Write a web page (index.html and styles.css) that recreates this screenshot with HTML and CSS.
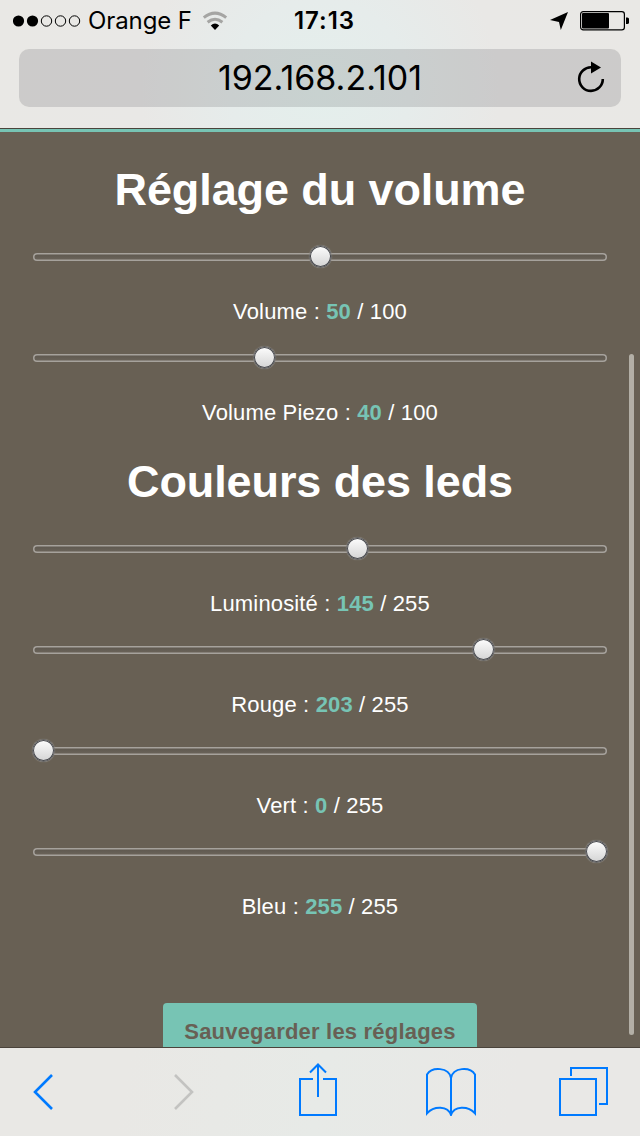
FILE: index.html
```
<!DOCTYPE html>
<html lang="fr">
	<head>
		<meta charset="UTF-8">
		<title>Réglages</title>
		<link rel="stylesheet" href="styles.css">
	</head>
	<body>
		<div class="phone">
			<div class="top">
				<div class="status">
					<div class="network">
						<svg class="signal" width="69" height="12" viewBox="0 0 69 12">
							<circle cx="5.5" cy="6" r="5.6"/>
							<circle cx="19.5" cy="6" r="5.6"/>
							<circle class="empty" cx="33.5" cy="6" r="5.2"/>
							<circle class="empty" cx="47.5" cy="6" r="5.2"/>
							<circle class="empty" cx="61.5" cy="6" r="5.2"/>
						</svg>
						<span class="operator">Orange F</span>
						<svg class="wifi" width="26" height="20" viewBox="0 0 26 20">
							<path class="wave" d="M1.8 6.6Q13 -2.4 24.2 6.6"/>
							<path class="wave" d="M5.6 11.2Q13 5.4 20.4 11.2"/>
							<path d="M8.8 14.4Q13 10.8 17.2 14.4L13 19Z"/>
						</svg>
					</div>
					<div class="clock">17:13</div>
					<div class="power">
						<svg width="18" height="18" viewBox="0 0 18 18">
							<path d="M18 0L10.8 18L9 9.9L0 8Z"/>
						</svg>
						<svg width="49" height="20" viewBox="0 0 49 20">
							<rect class="case" x=".6" y=".6" width="43.8" height="18.2" rx="2.6"/>
							<rect x="2" y="2" width="27" height="15.4" rx="1"/>
							<path d="M46 6.4h1.4q1.6 0 1.6 1.5v3.5q0 1.5 -1.6 1.5H46Z"/>
						</svg>
					</div>
				</div>
				<div class="address">
					<span class="url">192.168.2.101</span>
					<svg class="reload" width="28" height="32" viewBox="0 0 28 32">
						<path class="arc" d="M14.5 6.3A11.8 11.8 0 1 0 25.8 18"/>
						<path d="M14 0.5L24 6.5L14 12.5Z"/>
					</svg>
				</div>
			</div>

			<div class="page">
				<h1>Réglage du volume</h1>
				<div class="setting">
					<input type="range" min="0" max="100" value="50">
					<p>Volume : <b>50</b> / 100</p>
				</div>
				<div class="setting">
					<input type="range" min="0" max="100" value="40">
					<p>Volume Piezo : <b>40</b> / 100</p>
				</div>
				<h1>Couleurs des leds</h1>
				<div class="setting">
					<input type="range" min="0" max="255" value="145">
					<p>Luminosité : <b>145</b> / 255</p>
				</div>
				<div class="setting">
					<input type="range" min="0" max="255" value="203">
					<p>Rouge : <b>203</b> / 255</p>
				</div>
				<div class="setting">
					<input type="range" min="0" max="255" value="0">
					<p>Vert : <b>0</b> / 255</p>
				</div>
				<div class="setting">
					<input type="range" min="0" max="255" value="255">
					<p>Bleu : <b>255</b> / 255</p>
				</div>
				<button class="save">Sauvegarder les réglages</button>
				<div class="scrollbar"></div>
			</div>

			<div class="toolbar">
				<svg class="back" width="20" height="36" viewBox="0 0 20 36">
					<path d="M19 1L2 18L19 35"/>
				</svg>
				<svg class="forward" width="20" height="36" viewBox="0 0 20 36">
					<path d="M1 1L18 18L1 35"/>
				</svg>
				<svg class="share" width="38" height="54" viewBox="0 0 38 54">
					<path d="M14 17H1V53H37V17H24M19 35V2M11 10.5L19 2.5L27 10.5"/>
				</svg>
				<svg class="book" width="50" height="50" viewBox="0 0 50 50">
					<path d="M25 49V12C23 1 6 0.5 1 8.5V47.3C8 39.5 22 39.5 25 49C28 39.5 42 39.5 49 47.3V8.5C44 0.5 27 1 25 12"/>
				</svg>
				<svg class="tabs" width="50" height="50" viewBox="0 0 50 50">
					<path d="M1 13H37V49H1ZM12 10V2H48V38H40"/>
				</svg>
			</div>
		</div>
	</body>
</html>
```
FILE: styles.css
```
body{
	margin: 0;
	font-family: "Liberation Sans", Arial, sans-serif;
}
svg{
	display: block;
	flex: none;
}
.phone{
	display: flex;
	flex-direction: column;
	width: 640px;
	height: 1136px;
	overflow: hidden;
}

/* status bar + address */
.top{
	box-sizing: border-box;
	height: 129px;
	border-bottom: 1px solid #4a433b;
	background: radial-gradient(circle at 320px 90px, #e4efec 0, #e6eceb 90px, #e9e8e6 180px, #e9e8e5 100%);
	font-family: Inter, "Liberation Sans", sans-serif;
}
.status{
	display: grid;
	grid-template-columns: 1fr auto 1fr;
	align-items: center;
	height: 41px;
	padding: 0 11px 0 13px;
	font-size: 24px;
}
.network{
	display: flex;
	align-items: center;
}
.operator{
	margin: 0 10px 0 6px;
	letter-spacing: -0.1px;
	white-space: nowrap;
}
.empty{
	fill: none;
	stroke: #000;
	stroke-width: 1;
}
.wave{
	fill: none;
	stroke: #a5a5a3;
	stroke-width: 3;
}
.clock{
	margin-left: 7px;
	font-weight: 600;
	letter-spacing: 1px;
}
.power{
	display: flex;
	justify-content: flex-end;
	align-items: center;
	gap: 12px;
}
.case{
	fill: none;
	stroke: #000;
	stroke-width: 1.2;
}
.address{
	display: grid;
	grid-template-columns: 1fr auto 1fr;
	align-items: center;
	box-sizing: border-box;
	height: 58px;
	margin: 8px 19px 0;
	padding: 0 16px 2px;
	border-radius: 10px;
	background: rgba(0,0,10,.122);
}
.url{
	grid-column: 2;
	font-size: 34px;
}
.reload{
	justify-self: end;
}
.arc{
	fill: none;
	stroke: #000;
	stroke-width: 2.6;
}

/* page */
.page{
	position: relative;
	box-sizing: border-box;
	height: 918px;
	padding: 32px 33px 0;
	border-top: 3px solid #77c4b4;
	overflow: hidden;
	background-color: #686054;
	color: #fff;
	text-align: center;
}
h1{
	margin: 0 0 30px;
	font-size: 45px;
	letter-spacing: -0.1px;
	line-height: 52px;
}
.setting{
	height: 100.9px;
}
.setting + h1{
	margin-top: 8.2px;
}
.setting p{
	margin: 31px 0 0;
	font-size: 22px;
	letter-spacing: 0.15px;
	line-height: 26px;
}
.setting b{
	color: #77c4b4;
}
input[type='range']{
	-webkit-appearance: none;
	display: block;
	width: 100%;
	height: 22px;
	margin: 0;
	background: none;
}
input[type='range']::-webkit-slider-runnable-track{
	height: 8px;
	border-radius: 4px;
	background: linear-gradient(#5c564d, #6d665c);
	box-shadow: inset 0 0 0 1.5px #a6a29c;
}
input[type='range']::-webkit-slider-thumb{
	-webkit-appearance: none;
	box-sizing: border-box;
	width: 21px;
	height: 21px;
	margin-top: -7px;
	border-radius: 50%;
	background: linear-gradient(#fdfdfd, #d4d4d4);
	box-shadow: inset 0 0 0 1px #45464a, 0 0 0 .5px #45464a, 0 0 1px 1px #8f8b85;
}
.save{
	display: block;
	width: 314px;
	height: 58px;
	margin: 61.4px auto 0;
	padding: 0;
	border: 0;
	border-radius: 4px;
	background-color: #77c4b4;
	color: #686054;
	font: bold 22px "Liberation Sans", Arial, sans-serif;
	letter-spacing: 0.2px;
}
.scrollbar{
	position: absolute;
	top: 222px;
	right: 6px;
	width: 5px;
	height: 681px;
	border-radius: 3px;
	background-color: #b3afa6;
}

/* browser buttons */
.toolbar{
	display: flex;
	align-items: flex-end;
	box-sizing: border-box;
	height: 89px;
	padding: 0 31px 20px 33px;
	border-top: 1px solid #4a433b;
	background: linear-gradient(100deg, #e9e8e5 20%, #e7eae7 50%, #e9e8e6 80%);
}
.toolbar path{
	fill: none;
	stroke: #007aff;
	stroke-width: 2;
}
.toolbar .back path,
.toolbar .forward path{
	stroke-width: 2.6;
}
.toolbar .forward path{
	stroke: #c3c3c1;
}
.back,
.forward{
	margin-bottom: 6px;
}
.forward{
	margin-left: 121px;
}
.share{
	margin-left: 105px;
}
.book{
	margin-left: 89px;
}
.tabs{
	margin-left: 83px;
}
```
